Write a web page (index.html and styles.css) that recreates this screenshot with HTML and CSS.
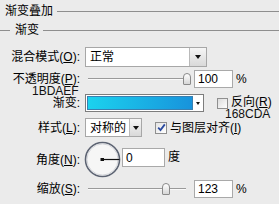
FILE: index.html
```html
<!DOCTYPE html>
<html>
<head>
<meta charset="utf-8">
<link rel="stylesheet" href="styles.css">
</head>
<body>
<div class="panel">
  <div class="group-title"><span class="title-text">渐变叠加</span><span class="rule"></span></div>
  <div class="sub-title"><span class="rule lead"></span><span class="title-text">渐变</span><span class="rule"></span></div>
  <div class="rows">
    <div class="row r1">
      <span class="lbl">混合模式(<u>O</u>):</span>
      <div class="select blend"><span class="sel-text">正常</span><span class="drop"><i class="tri"></i></span></div>
    </div>
    <div class="row r2">
      <span class="lbl">不透明度(<u>P</u>):</span>
      <div class="slider"><span class="track"></span><span class="thumb" style="left:95px"></span></div>
      <div class="num">100</div><span class="unit">%</span>
    </div>
    <div class="row r3">
      <span class="lbl">渐变:</span>
      <div class="grad"><span class="grad-fill"></span><span class="grad-drop"><i class="tri"></i></span></div>
      <span class="check"></span><span class="ck-label reverse">反向(<u>R</u>)</span>
    </div>
    <div class="row r4">
      <span class="lbl">样式(<u>L</u>):</span>
      <div class="select style"><span class="sel-text">对称的</span><span class="drop"><i class="tri"></i></span></div>
      <span class="check checked"><svg width="9" height="9" viewBox="0 0 9 9"><path d="M1.2 4.6 L3.5 7 L7.8 1.4" fill="none" stroke="#2a4aa0" stroke-width="1.8"/></svg></span><span class="ck-label align">与图层对齐(<u>I</u>)</span>
    </div>
    <div class="row r5">
      <span class="lbl">角度(<u>N</u>):</span>
      <svg class="dial" width="37" height="37" viewBox="0 0 37 37">
        <circle cx="18.5" cy="18.5" r="17" fill="#f6f6f6" stroke="#5c6372" stroke-width="1.6"/>
        <circle cx="18.5" cy="18.5" r="15.6" fill="none" stroke="#c9ccd2" stroke-width="0.8"/>
        <line x1="18.5" y1="18.5" x2="35.5" y2="18.5" stroke="#111" stroke-width="1.2"/>
        <rect x="16.5" y="17" width="3.5" height="3" fill="#111"/>
      </svg>
      <div class="num angle">0</div><span class="unit deg">度</span>
    </div>
    <div class="row r6">
      <span class="lbl">缩放(<u>S</u>):</span>
      <div class="slider"><span class="track"></span><span class="thumb" style="left:74px"></span></div>
      <div class="num">123</div><span class="unit">%</span>
    </div>
  </div>
  <span class="note n1">1BDAEF</span>
  <span class="note n2">168CDA</span>
</div>
</body>
</html>
```
FILE: styles.css
```css
html, body {
  margin: 0;
  padding: 0;
  background: #ebebeb;
}
.panel {
  position: relative;
  width: 279px;
  height: 204px;
  padding-top: 4px;
  box-sizing: border-box;
  font-family: "Liberation Sans", "Noto Sans CJK SC", sans-serif;
  font-size: 12px;
  color: #000;
  overflow: hidden;
}
.group-title, .sub-title {
  display: flex;
  align-items: center;
  height: 14px;
  line-height: 14px;
}
.sub-title { margin-top: 5px; }
.title-text { margin-left: 5px; }
.rule {
  flex: 1;
  height: 0;
  border-top: 1px solid #8e8e8e;
  margin-left: 4px;
}
.rule.lead {
  flex: none;
  width: 10px;
  margin-left: 0;
}
.rows {
  margin-top: 10px;
  display: flex;
  flex-direction: column;
}
.row {
  display: flex;
  align-items: center;
  line-height: 14px;
}
.r1 { height: 20px; }
.r2 { height: 18px; margin-top: 3px; }
.r3 { height: 18px; margin-top: 6px; }
.r4 { height: 19px; margin-top: 6px; }
.r5 { height: 37px; margin-top: 4px; }
.r6 { height: 18px; margin-top: 2px; }
.lbl {
  flex: none;
  width: 80px;
  text-align: right;
  margin-right: 5px;
  white-space: nowrap;
}
u { text-decoration: underline; text-underline-offset: 1px; }
.select {
  display: flex;
  height: 100%;
  box-sizing: border-box;
  border: 1px solid #a7a7a7;
  background: #fff;
}
.select.blend { width: 122px; }
.select.style { width: 57px; }
.sel-text {
  flex: 1;
  padding-left: 4px;
  display: flex;
  align-items: center;
  white-space: nowrap;
  overflow: hidden;
}
.drop {
  flex: none;
  width: 16px;
  display: flex;
  align-items: center;
  justify-content: center;
  border-left: 1px solid #b9b9b9;
  background: linear-gradient(#f6f6f6, #d9d9d9);
}
.select.style .drop { width: 11px; }
.tri {
  display: block;
  width: 0;
  height: 0;
  border-left: 3.5px solid transparent;
  border-right: 3.5px solid transparent;
  border-top: 4px solid #111;
}
.slider {
  position: relative;
  width: 104px;
  height: 100%;
  margin-left: 3px;
  flex: none;
}
.track {
  position: absolute;
  left: 0;
  right: 6px;
  top: 8px;
  height: 0;
  border-top: 1px solid #9a9a9a;
  border-bottom: 1px solid #fafafa;
}
.thumb {
  position: absolute;
  top: 3px;
  width: 6px;
  height: 10px;
  border: 1px solid #8a8a8a;
  border-radius: 4px 4px 1px 1px;
  background: linear-gradient(#ffffff, #d6d6d6);
}
.num {
  flex: none;
  width: 39px;
  height: 18px;
  box-sizing: border-box;
  margin-left: 2px;
  padding-left: 3px;
  border: 1px solid #a9a9a9;
  background: #fff;
  display: flex;
  align-items: center;
}
.num.angle {
  width: 43px;
  height: 19px;
  margin-left: 1px;
  margin-bottom: 4px;
}
.unit { margin-left: 3px; }
.unit.deg { margin-left: 3px; margin-bottom: 5px; }
.grad {
  display: flex;
  width: 119px;
  height: 18px;
  box-sizing: border-box;
  border: 1px solid #7d7d7d;
  background: #fff;
  padding: 1px;
}
.grad-fill {
  flex: 1;
  background: linear-gradient(to right, #1bd2ee, #1893dc);
  border: 1px solid #3a7fb0;
}
.grad-drop {
  flex: none;
  width: 8px;
  display: flex;
  align-items: center;
  justify-content: center;
  margin-left: 1px;
}
.grad-drop .tri {
  border-left-width: 2.5px;
  border-right-width: 2.5px;
  border-top-width: 3px;
}
.check {
  flex: none;
  width: 11px;
  height: 11px;
  box-sizing: border-box;
  margin-left: 13px;
  border: 1px solid #8f8f8f;
  background: linear-gradient(135deg, #dcdcdc, #ffffff);
  display: flex;
  align-items: center;
  justify-content: center;
}
.check.checked {
  width: 12px;
  height: 12px;
  background: linear-gradient(135deg, #e4e4e4, #ffffff);
}
.ck-label { margin-left: 3px; white-space: nowrap; }
.ck-label.reverse { margin-bottom: 3px; }
.dial {
  display: block;
  flex: none;
  margin-left: -1px;
}
.note {
  position: absolute;
  font-family: "Liberation Sans", sans-serif;
  font-size: 12px;
  line-height: 12px;
  color: #111;
}
.n1 { left: 32px; top: 85px; }
.n2 { left: 225px; top: 108px; }
```
